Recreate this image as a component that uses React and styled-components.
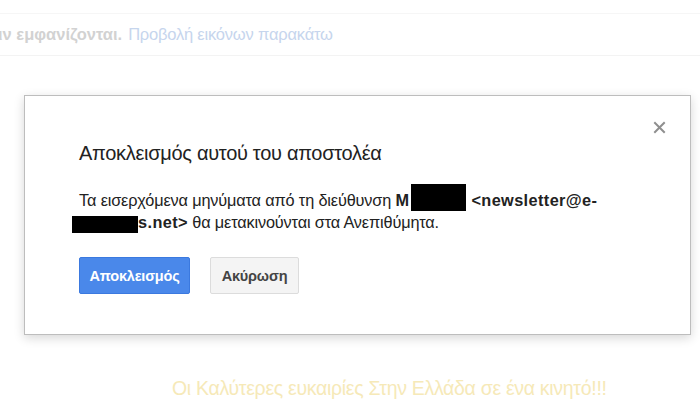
import React from "react";
import styled, { createGlobalStyle } from "styled-components";

const Global = createGlobalStyle`
  html, body {
    margin: 0;
    padding: 0;
    background: #fff;
    font-family: Arial, "Liberation Sans", sans-serif;
  }
`;

const Page = styled.div`
  position: relative;
  width: 700px;
  height: 404px;
  overflow: hidden;
  background: #fff;
`;

const Notice = styled.div`
  margin-top: 13px;
  height: 41px;
  border-top: 1px solid #f6f6f6;
  border-bottom: 1px solid #f3f3f3;
  display: flex;
  align-items: center;
  font-size: 16.5px;
  white-space: nowrap;
  margin-left: -2px;

  b {
    color: #d2d2d2;
    font-weight: bold;
  }
  span {
    margin-left: 6px;
    color: #c6d5ed;
    letter-spacing: -0.2px;
  }
`;

const Promo = styled.div`
  position: absolute;
  left: 172px;
  top: 377px;
  font-size: 19.5px;
  color: #f6e9b8;
  white-space: nowrap;
  letter-spacing: -0.3px;
`;

const Dialog = styled.div`
  position: absolute;
  left: 24px;
  top: 95px;
  width: 667px;
  height: 240px;
  box-sizing: border-box;
  background: #fff;
  border: 1px solid #bdbdbd;
  box-shadow: 0 3px 10px rgba(0, 0, 0, 0.16);
  padding: 0 54px;
`;

const Close = styled.button`
  position: absolute;
  right: 24px;
  top: 25px;
  width: 13px;
  height: 13px;
  padding: 0;
  border: 0;
  background: none;
  display: flex;
  svg {
    display: block;
  }
`;

const Title = styled.h2`
  margin: 46px 0 0;
  font-size: 20px;
  line-height: 22px;
  font-weight: normal;
  color: #222;
  letter-spacing: -0.3px;
`;

const Body = styled.p`
  margin: 25px 0 0;
  font-size: 16.3px;
  line-height: 22px;
  color: #222;
  letter-spacing: -0.15px;
  white-space: nowrap;

  b {
    font-weight: bold;
    letter-spacing: 0.4px;
  }
`;

const Redact = styled.span`
  display: inline-block;
  vertical-align: -5px;
  width: ${(p) => p.w}px;
  height: ${(p) => p.h}px;
  margin-top: ${(p) => 20 - p.h}px;
  margin-left: ${(p) => p.ml || 0}px;
  background: #000;
`;

const Actions = styled.div`
  display: flex;
  gap: 20px;
  margin-top: 24px;
`;

const Button = styled.button`
  height: 37px;
  box-sizing: border-box;
  padding: 0;
  width: ${(p) => (p.primary ? 111 : 89)}px;
  border-radius: 2px;
  font-family: Arial, "Liberation Sans", sans-serif;
  font-size: 14.5px;
  font-weight: bold;
  letter-spacing: -0.2px;
  border: 1px solid ${(p) => (p.primary ? "#3b79df" : "#dcdcdc")};
  background: ${(p) => (p.primary ? "#4a88ea" : "#f4f4f4")};
  color: ${(p) => (p.primary ? "#fff" : "#444")};
`;

export default function App() {
  return (
    <Page>
      <Global />
      <Notice>
        <b>ιν εμφανίζονται.</b>
        <span>Προβολή εικόνων παρακάτω</span>
      </Notice>
      <Promo>Οι Καλύτερες ευκαιρίες Στην Ελλάδα σε ένα κινητό!!!</Promo>

      <Dialog>
        <Close aria-label="Κλείσιμο">
          <svg width="13" height="13" viewBox="0 0 13 13">
            <path
              d="M2 2 L11 11 M11 2 L2 11"
              stroke="#8f8f8f"
              strokeWidth="2"
              strokeLinecap="square"
            />
          </svg>
        </Close>
        <Title>Αποκλεισμός αυτού του αποστολέα</Title>
        <Body>
          Τα εισερχόμενα μηνύματα από τη διεύθυνση <b>M</b>
          <Redact w={55} h={27} ml={2} />
          <b> &lt;newsletter@e-</b>
          <br />
          <Redact w={66} h={17} ml={-7} />
          <b>s.net&gt;</b> θα μετακινούνται στα Ανεπιθύμητα.
        </Body>
        <Actions>
          <Button primary>Αποκλεισμός</Button>
          <Button>Ακύρωση</Button>
        </Actions>
      </Dialog>
    </Page>
  );
}
